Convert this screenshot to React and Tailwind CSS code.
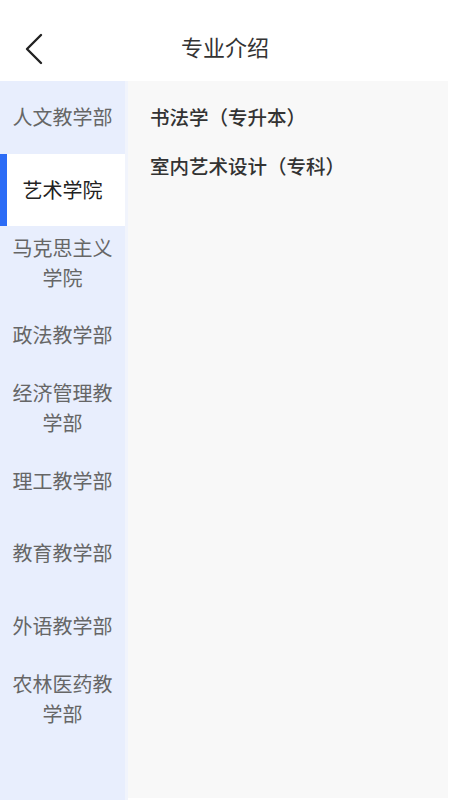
import React, { useState } from 'react';

const DEPARTMENTS = [
  { name: '人文教学部', majors: [] },
  { name: '艺术学院', majors: ['书法学（专升本）', '室内艺术设计（专科）'] },
  { name: '马克思主义学院', majors: [] },
  { name: '政法教学部', majors: [] },
  { name: '经济管理教学部', majors: [] },
  { name: '理工教学部', majors: [] },
  { name: '教育教学部', majors: [] },
  { name: '外语教学部', majors: [] },
  { name: '农林医药教学部', majors: [] }
];

const FONT = { fontFamily: '"Noto Sans CJK SC", "Noto Sans", sans-serif' };

export default function App() {
  const [active, setActive] = useState(1);
  const majors = DEPARTMENTS[active].majors;

  return (
    <div className="flex h-[800px] w-[450px] flex-col bg-white" style={FONT}>
      <header className="relative flex h-[81px] shrink-0 items-center justify-center pt-[12px]">
        <button className="absolute left-[22px] top-[31px] p-[2px]" aria-label="返回">
          <svg width="19" height="32" viewBox="0 0 19 32" fill="none">
            <path d="M17 2 L3 16 L17 30" stroke="#222" strokeWidth="2.4" strokeLinecap="round" strokeLinejoin="round" />
          </svg>
        </button>
        <h1 className="text-[22px] font-normal text-[#333]">专业介绍</h1>
      </header>

      <div className="flex min-h-0 flex-1">
        <nav className="w-[125px] shrink-0 bg-[#e8eefd]">
          {DEPARTMENTS.map((dept, i) => (
            <button
              key={dept.name}
              onClick={() => setActive(i)}
              className={`relative flex h-[72.7px] w-full items-center justify-center px-[12px] text-center text-[20px] leading-[30px] ${
                i === active ? 'bg-white text-[#222]' : 'text-[#666]'
              }`}
            >
              {i === active ? (
                <span className="absolute left-0 top-0 h-full w-[7px] bg-[#2c6cf6]" />
              ) : null}
              <span className="block w-full break-all">{dept.name}</span>
            </button>
          ))}
        </nav>

        <div className="w-[3px] shrink-0 bg-[#f1f4fc]" />

        <main className="mb-[2px] mr-[2px] flex-1 bg-[#f8f8f8] pl-[22px] pt-[20px]">
          {majors.map((m) => (
            <div key={m} className="h-[49px] text-[19.5px] font-medium leading-[32px] text-[#333]">
              {m}
            </div>
          ))}
        </main>
      </div>
    </div>
  );
}
